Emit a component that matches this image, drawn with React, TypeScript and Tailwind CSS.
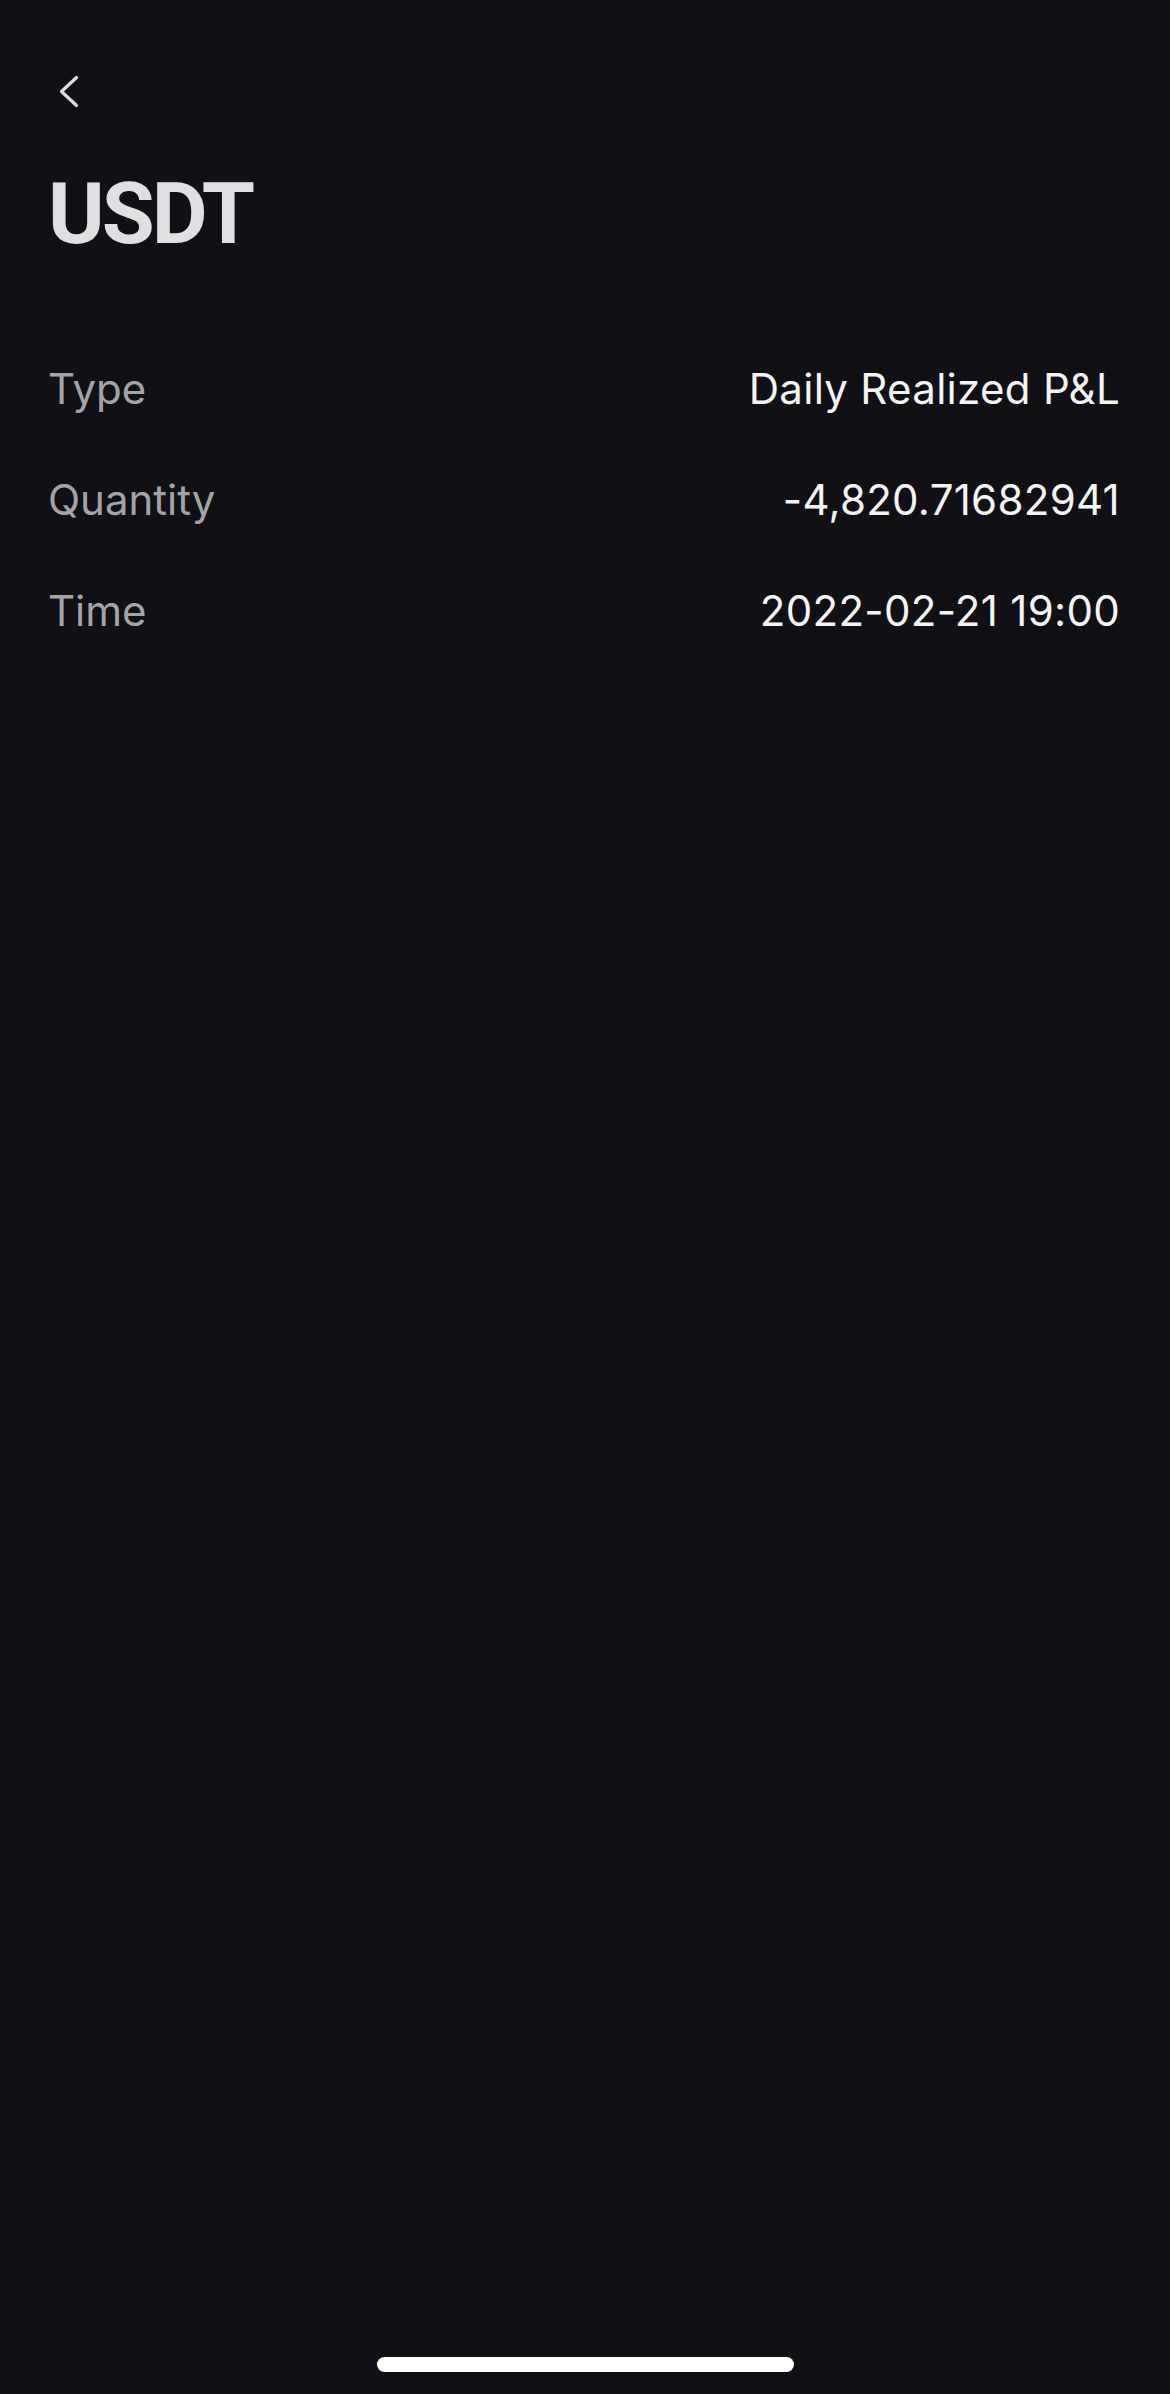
import React from "react";

const ROWS = [
  { label: "Type", value: "Daily Realized P&L" },
  { label: "Quantity", value: "-4,820.71682941" },
  { label: "Time", value: "2022-02-21 19:00" },
];

export default function App() {
  return (
    <div
      className="flex h-[2394px] w-full flex-col bg-[#111115] pl-[48px] pr-[50px]"
      style={{ fontFamily: "Inter, 'Noto Sans', sans-serif" }}
    >
      {/* Top bar */}
      <div className="pt-[72px]">
        <svg width="26" height="40" viewBox="0 0 26 40" className="ml-[8px]" fill="none">
          <path
            d="M20.5 5.5L5.5 19.5L20.5 33.5"
            stroke="#dcdcde"
            strokeWidth="3.2"
            strokeLinecap="round"
            strokeLinejoin="round"
          />
        </svg>
      </div>

      <h1
        className="mt-[59px] text-[86px] font-bold leading-none tracking-[-3px] text-[#e0e0e2]"
        style={{ fontFamily: "Roboto, 'Liberation Sans', sans-serif" }}
      >
        USDT
      </h1>

      <dl className="mt-[76px]">
        {ROWS.map((r) => (
          <div key={r.label} className="flex h-[111px] items-center justify-between text-[42px] leading-[111px]">
            <dt className="text-[#a3a3a8]">{r.label}</dt>
            <dd className="tracking-[0.3px] text-[#f4f4f5]">{r.value}</dd>
          </div>
        ))}
      </dl>

      {/* Home indicator */}
      <div className="mt-auto flex justify-center pb-[22px]">
        <div className="ml-[2px] h-[15px] w-[417px] rounded-full bg-white" />
      </div>
    </div>
  );
}
